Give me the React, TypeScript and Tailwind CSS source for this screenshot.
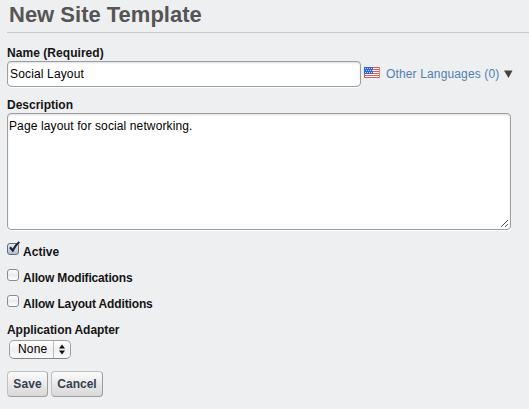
import React from 'react';

function Flag() {
  return (
    <svg width="16" height="11" viewBox="0 0 16 11" shapeRendering="crispEdges" className="shrink-0">
      <rect width="16" height="11" fill="#fff" />
      {[0, 2, 4, 6, 8, 10].map((y) => (
        <rect key={y} y={y} width="16" height="1" fill={y === 0 || y === 10 ? '#c9645c' : '#f0544c'} />
      ))}
      <rect width="9" height="7" fill="#2f62df" />
      {[1, 3, 5].map((y) =>
        [1, 3, 5, 7].map((x) => (
          <rect key={`${x}-${y}`} x={y === 3 ? x + 1 : x} y={y} width="1" height="1" fill="#c5dcff" />
        )),
      )}
      <rect x="15" width="1" height="11" fill="#d4847c" />
      <rect y="7" width="1" height="4" fill="#c9645c" />
    </svg>
  );
}

function Check({ label, tracking, checked = false }: { label: string; tracking: string; checked?: boolean }) {
  return (
    <label className="flex h-[26px] items-start">
      <span
        className={
          'relative mt-px h-[12px] w-[12px] shrink-0 rounded-[3px] border ' +
          (checked
            ? 'border-[#626b7a] bg-linear-to-b from-[#e4ebf4] to-[#b4c0d0]'
            : 'border-[#8b8b8b] bg-linear-to-b from-white via-[#ececec] to-white')
        }
      >
        {checked && (
          <svg width="14" height="14" viewBox="0 0 14 14" className="absolute -top-[3px] -left-px">
            <path d="M3 6.200 5.700 9.500Q8 4.500 12.300 1" fill="none" stroke="#1e2633" strokeWidth="2.200" />
          </svg>
        )}
      </span>
      <span className={'mt-[3px] ml-1 font-bold leading-[14px] ' + tracking}>{label}</span>
    </label>
  );
}

function Button({ label, width }: { label: string; width: string }) {
  return (
    <button
      className={
        'h-[26px] rounded-[4px] border border-[#c0c1c2] border-r-[#9e9e9e] border-b-[#9e9e9e] bg-linear-to-b from-[#fbfbfb] to-[#d8d8d8] text-center font-bold leading-[24px] text-[#34404f] ' +
        width
      }
    >
      {label}
    </button>
  );
}

export default function App() {
  return (
    <main className="flex h-[409px] w-[529px] flex-col overflow-hidden bg-[#eeeff1] pl-[7px] font-['Liberation_Sans',Arial,sans-serif] text-[12px] text-[#151515]">
      <h1 className="h-[33px] border-b border-[#c8c9ca] pt-[2px] pl-[2px] text-[22px] font-bold leading-[25px] text-[#555]">
        New Site Template
      </h1>
      <div className="mt-[12px] h-[16px] font-bold leading-[16px] tracking-[0.05px]">Name (Required)</div>
      <div className="flex h-[26px] items-center">
        <div className="h-[26px] w-[354px] rounded-[4px] border border-[#9c9ea0] bg-white pl-[2px] leading-[24px] tracking-[0.15px] text-black shadow-[inset_0_1px_2px_#ddd,0_1px_0_#fff]">
          Social Layout
        </div>
        <div className="ml-[3px] flex items-center">
          <span className="-mt-[3px]"><Flag /></span>
          <span className="ml-[6px] leading-[16px] tracking-[0.14px] text-[#5080b0]">Other Languages (0)</span>
          <svg width="9" height="8" viewBox="0 0 9 8" className="ml-[5px]">
            <path d="M0 .5h8.500L4.500 8z" fill="#444" />
          </svg>
        </div>
      </div>
      <div className="mt-[10px] h-[16px] font-bold leading-[16px]">Description</div>
      <div className="flex h-[117px] w-[504px] shrink-0 justify-between rounded-[4px] border border-[#9c9ea0] bg-white pl-px leading-[16px] text-black shadow-[inset_0_1px_2px_#ddd,0_1px_0_#fff]">
        <span className="mt-[4px] tracking-[0.12px]">Page layout for social networking.</span>
        <svg width="10" height="10" viewBox="0 0 10 10" shapeRendering="crispEdges" className="mb-px self-end">
          {[0, 1, 2, 3, 4, 5, 6].map((i) => (
            <rect key={i} x={1 + i} y={8 - i} width="1" height="1" fill="#555" />
          ))}
          {[0, 1, 2].map((i) => (
            <rect key={i} x={5 + i} y={8 - i} width="1" height="1" fill="#555" />
          ))}
        </svg>
      </div>
      <div className="mt-[12px] flex flex-col">
        <Check label="Active" tracking="tracking-[0.05px]" checked />
        <Check label="Allow Modifications" tracking="tracking-[-0.17px]" />
        <Check label="Allow Layout Additions" tracking="tracking-[-0.15px]" />
      </div>
      <div className="mt-[2px] h-[18px] font-bold leading-[16px] tracking-[-0.06px]">Application Adapter</div>
      <div className="ml-[2px] flex h-[19px] w-[62px] shrink-0 rounded-[5px] border border-[#a0a0a0] border-b-[#858585] bg-linear-to-b from-white via-[#f0f0f0] to-[#fafafa] text-black">
        <span className="w-[44px] border-r border-[#bbb] pl-[8px] leading-[17px] tracking-[0.15px]">None</span>
        <svg width="16" height="17" viewBox="0 0 16 17">
          <path d="M5 7.500h6L8 3.500zM5 9.500h6l-3 4z" fill="#111" />
        </svg>
      </div>
      <div className="mt-[12px] flex gap-[3px]">
        <Button label="Save" width="w-[41px] tracking-[0.1px]" />
        <Button label="Cancel" width="w-[52px]" />
      </div>
    </main>
  );
}
